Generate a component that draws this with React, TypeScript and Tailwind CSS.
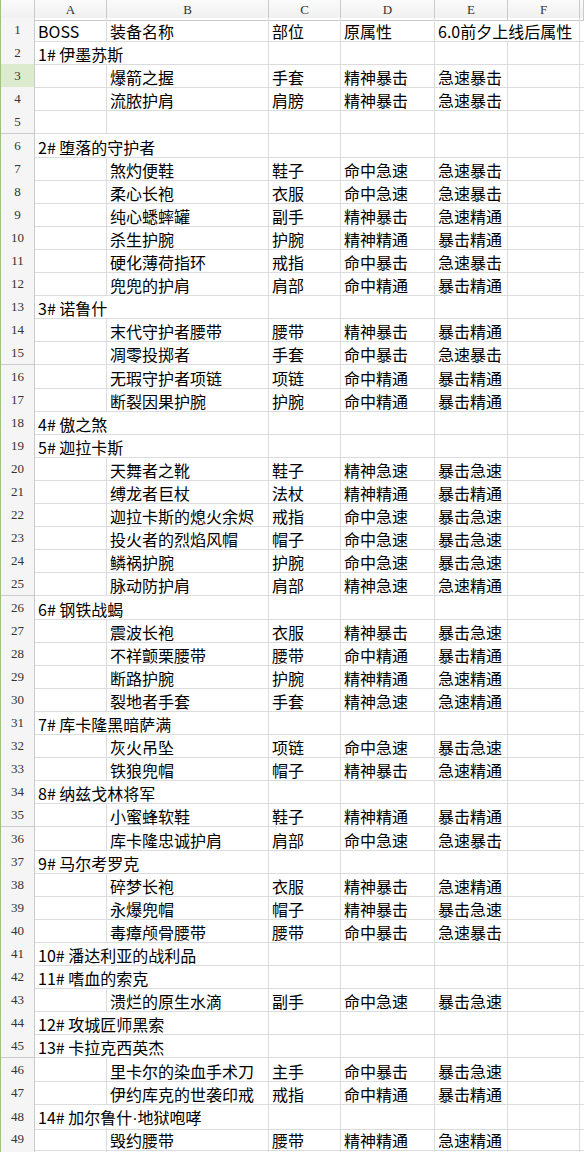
import React from "react";

type Row = string[]; // [A, B, C, D, E]

const rows: Row[] = [
  ["BOSS", "装备名称", "部位", "原属性", "6.0前夕上线后属性"],
  ["1# 伊墨苏斯"],
  ["", "爆箭之握", "手套", "精神暴击", "急速暴击"],
  ["", "流脓护肩", "肩膀", "精神暴击", "急速暴击"],
  [],
  ["2# 堕落的守护者"],
  ["", "煞灼便鞋", "鞋子", "命中急速", "急速暴击"],
  ["", "柔心长袍", "衣服", "命中急速", "急速暴击"],
  ["", "纯心蟋蟀罐", "副手", "精神暴击", "急速精通"],
  ["", "杀生护腕", "护腕", "精神精通", "暴击精通"],
  ["", "硬化薄荷指环", "戒指", "命中暴击", "急速暴击"],
  ["", "兜兜的护肩", "肩部", "命中精通", "暴击精通"],
  ["3# 诺鲁什"],
  ["", "末代守护者腰带", "腰带", "精神暴击", "暴击精通"],
  ["", "凋零投掷者", "手套", "命中暴击", "急速暴击"],
  ["", "无瑕守护者项链", "项链", "命中精通", "暴击精通"],
  ["", "断裂因果护腕", "护腕", "命中精通", "暴击精通"],
  ["4# 傲之煞"],
  ["5# 迦拉卡斯"],
  ["", "天舞者之靴", "鞋子", "精神急速", "暴击急速"],
  ["", "缚龙者巨杖", "法杖", "精神精通", "暴击精通"],
  ["", "迦拉卡斯的熄火余烬", "戒指", "命中急速", "暴击急速"],
  ["", "投火者的烈焰风帽", "帽子", "命中急速", "暴击急速"],
  ["", "鳞祸护腕", "护腕", "命中急速", "暴击急速"],
  ["", "脉动防护肩", "肩部", "精神急速", "急速精通"],
  ["6# 钢铁战蝎"],
  ["", "震波长袍", "衣服", "精神暴击", "暴击急速"],
  ["", "不祥颤栗腰带", "腰带", "命中精通", "暴击精通"],
  ["", "断路护腕", "护腕", "精神精通", "急速精通"],
  ["", "裂地者手套", "手套", "精神急速", "急速精通"],
  ["7# 库卡隆黑暗萨满"],
  ["", "灰火吊坠", "项链", "命中急速", "暴击急速"],
  ["", "铁狼兜帽", "帽子", "精神暴击", "急速精通"],
  ["8# 纳兹戈林将军"],
  ["", "小蜜蜂软鞋", "鞋子", "精神精通", "暴击精通"],
  ["", "库卡隆忠诚护肩", "肩部", "命中急速", "急速暴击"],
  ["9# 马尔考罗克"],
  ["", "碎梦长袍", "衣服", "精神暴击", "急速精通"],
  ["", "永爆兜帽", "帽子", "精神暴击", "暴击急速"],
  ["", "毒瘴颅骨腰带", "腰带", "命中暴击", "急速暴击"],
  ["10# 潘达利亚的战利品"],
  ["11# 嗜血的索克"],
  ["", "溃烂的原生水滴", "副手", "命中急速", "暴击急速"],
  ["12# 攻城匠师黑索"],
  ["13# 卡拉克西英杰"],
  ["", "里卡尔的染血手术刀", "主手", "命中暴击", "暴击急速"],
  ["", "伊约库克的世袭印戒", "戒指", "命中精通", "暴击精通"],
  ["14# 加尔鲁什·地狱咆哮"],
  ["", "毁约腰带", "腰带", "精神精通", "急速精通"],
];

const grid = "grid grid-cols-[34px_72px_162px_72px_94px_73px_72px_1fr]";
const cell = "border-r border-b border-[#dadcdd] pl-[3px] pt-[3px] leading-[20px] whitespace-nowrap";
const head = "flex items-center justify-center border-r border-b border-[#c8cacb] text-[13px] text-[#333]";
const serif = { fontFamily: '"Liberation Serif", "DejaVu Serif", serif' };

// narrow middle dot like the original sheet font
function Text({ s }: { s: string }) {
  if (!s.includes("·")) return <>{s}</>;
  const [a, b] = s.split("·");
  return (
    <>
      {a}
      <span style={{ fontFamily: '"Liberation Sans", sans-serif' }}>·</span>
      {b}
    </>
  );
}

function HeaderRow() {
  return (
    <div className={`${grid} h-[18px] bg-gradient-to-b from-[#fbfbfb] to-[#f0f0f0]`}>
      <div className={head} />
      {["A", "B", "C", "D", "E", "F"].map((c) => (
        <div key={c} className={head} style={serif}>{c}</div>
      ))}
      <div className={head} />
    </div>
  );
}

function DataRow({ n, r, hideNum }: { n: number; r: Row; hideNum?: boolean }) {
  const tall = n % 10 === 5;
  const selected = n === 3;
  const boss = r.length === 1;
  const wideE = (r[4] ?? "").length > 4;
  return (
    <div className={`${grid} ${tall ? "h-[24px]" : "h-[23px]"}`}>
      <div
        className={`${head} ${selected ? "bg-[#dcebcd] text-[#6d8f3f]" : "bg-[#f5f5f5]"}`}
        style={serif}
      >
        {hideNum ? "" : n}
      </div>
      {boss ? (
        <div className={`${cell} col-span-2`}><Text s={r[0]} /></div>
      ) : (
        <>
          <div className={cell}>{r[0] ?? ""}</div>
          <div className={cell}>{r[1] ?? ""}</div>
        </>
      )}
      <div className={cell}>{r[2] ?? ""}</div>
      <div className={cell}>{r[3] ?? ""}</div>
      {wideE ? (
        <div className={`${cell} col-span-2`}>{r[4]}</div>
      ) : (
        <>
          <div className={cell}>{r[4] ?? ""}</div>
          <div className={cell} />
        </>
      )}
      <div className="border-b border-[#dadcdd]" />
    </div>
  );
}

export default function App() {
  return (
    <div
      className="w-[584px] h-[1152px] overflow-hidden bg-white text-[16px] text-black border-l border-[#9cc47c]"
      style={{ fontFamily: '"Noto Sans CJK SC", "Noto Sans", sans-serif' }}
    >
      <HeaderRow />
      {rows.map((r, i) => (
        <DataRow key={i} n={i + 1} r={r} />
      ))}
      {/* only a sliver of row 50 is on screen */}
      <DataRow n={50} r={[]} hideNum />
    </div>
  );
}
